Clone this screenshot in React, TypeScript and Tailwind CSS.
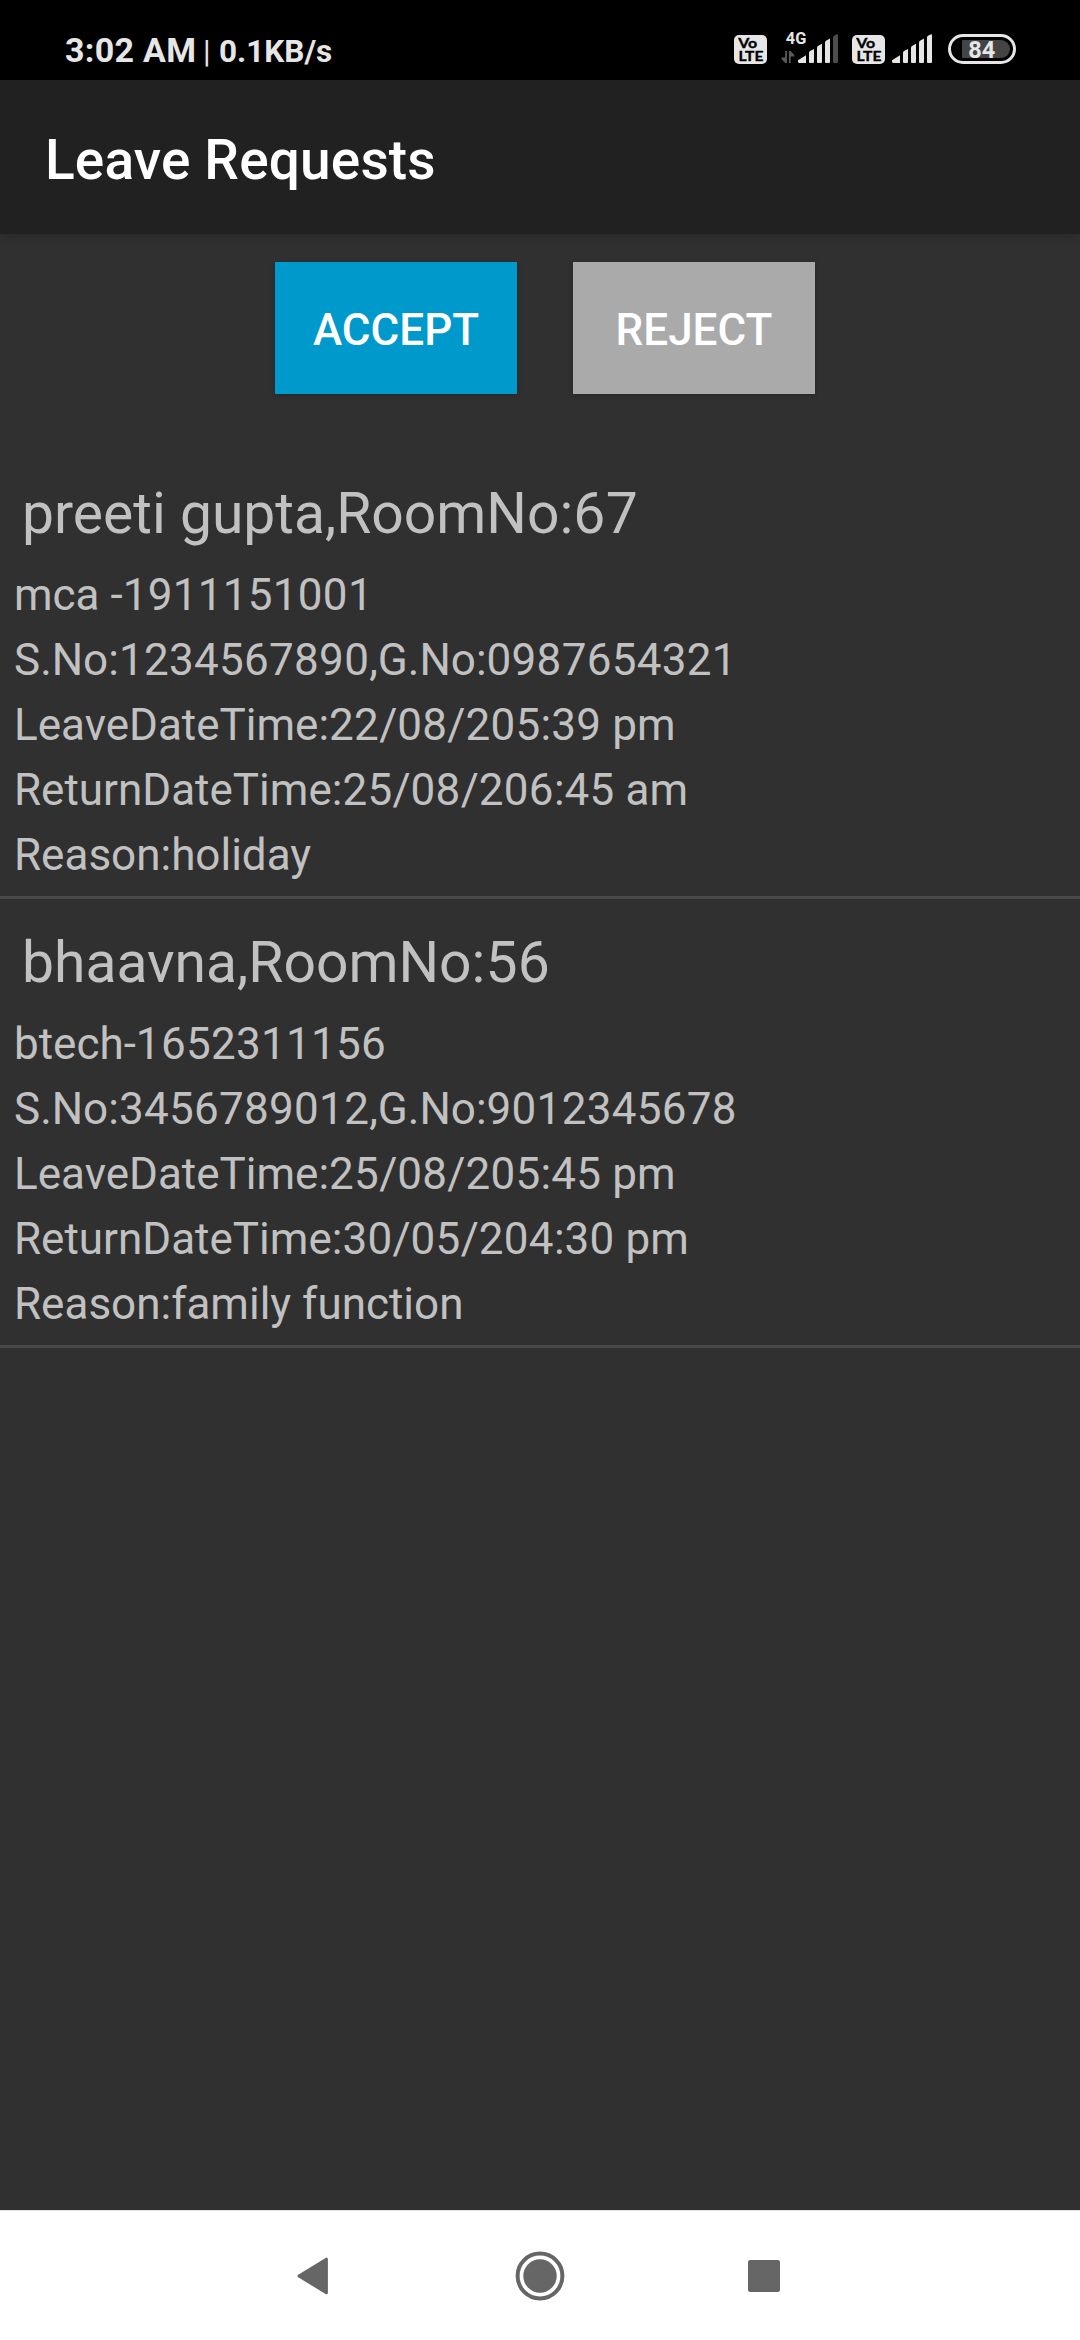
import type { ReactNode } from "react";

type LeaveRequest = { title: string; lines: string[] };

const requests: LeaveRequest[] = [
  {
    title: "preeti gupta,RoomNo:67",
    lines: [
      "mca -1911151001",
      "S.No:1234567890,G.No:0987654321",
      "LeaveDateTime:22/08/205:39 pm",
      "ReturnDateTime:25/08/206:45 am",
      "Reason:holiday",
    ],
  },
  {
    title: "bhaavna,RoomNo:56",
    lines: [
      "btech-1652311156",
      "S.No:3456789012,G.No:9012345678",
      "LeaveDateTime:25/08/205:45 pm",
      "ReturnDateTime:30/05/204:30 pm",
      "Reason:family function",
    ],
  },
];

function VolteIcon() {
  return (
    <svg className="h-[29px] w-[33px] shrink-0" viewBox="0 0 33 29" aria-hidden="true">
      <rect width="33" height="29" rx="5" fill="#e6e6e6" />
      <g fill="#000" stroke="#000" strokeWidth="0.3" fontFamily="Lato, sans-serif" fontWeight="700">
        <text x="4.2" y="12.8" fontSize="13" textLength="19" lengthAdjust="spacingAndGlyphs">Vo</text>
        <text x="4.4" y="25.8" fontSize="12.8" textLength="25" lengthAdjust="spacingAndGlyphs">LTE</text>
      </g>
    </svg>
  );
}

/* Five rising bars, each cut along one slanted top edge. */
function SignalBars({ last }: { last: string }) {
  return (
    <g fill="#e6e6e6">
      <path d="M0 26.2 L8 21.2 V29 H1.5 Q0 29 0 27.5 Z" />
      <path d="M11 18.6 Q11 17.6 12 17 L16 15 V28 Q16 29 15 29 H12 Q11 29 11 28 Z" />
      <path d="M19 13.5 Q19 12.5 20 11.9 L24 9.8 V28 Q24 29 23 29 H20 Q19 29 19 28 Z" />
      <path d="M27 8.4 Q27 7.4 28 6.8 L32 4.6 V28 Q32 29 31 29 H28 Q27 29 27 28 Z" />
      <path d="M35 3.4 Q35 2.4 36 1.8 L39 0.2 Q40 0 40 1 V28 Q40 29 39 29 H36 Q35 29 35 28 Z" fill={last} />
    </g>
  );
}

function MobileDataIcon() {
  return (
    <svg className="ml-[14px] h-[40px] w-[58px] shrink-0" viewBox="0 -8 58 40" aria-hidden="true">
      <text x="4.8" y="12.4" fontSize="16.4" fontWeight="700" fill="#e6e6e6" textLength="20.5" lengthAdjust="spacingAndGlyphs">4G</text>
      <path d="M4.1 19 H5.9 V31 H4.3 L0.6 27.2 V25.6 H4.1 Z" fill="#595959" />
      <path d="M9.7 31 H7.9 V19 H9.5 L13.2 22.8 V24.4 H9.7 Z" fill="#595959" />
      <g transform="translate(17 2)">
        <SignalBars last="#4c4c4c" />
      </g>
    </svg>
  );
}

function BatteryIcon() {
  return (
    <svg className="ml-[16px] h-[30px] w-[68px] shrink-0" viewBox="0 0 68 30" aria-hidden="true">
      <rect x="1.5" y="1.5" width="65" height="27" rx="13.5" fill="none" stroke="#e6e6e6" strokeWidth="3" />
      <path d="M15 6 H53 A9 9 0 0 1 53 24 H15 Q14 24 14 23 V7 Q14 6 15 6 Z" fill="#444" />
      <text x="20.2" y="23.7" fontSize="24" fontWeight="700" fill="#e6e6e6" textLength="27" lengthAdjust="spacingAndGlyphs">84</text>
    </svg>
  );
}

function StatusBar() {
  return (
    <header className="flex h-20 shrink-0 items-start bg-black pl-[65px] pr-16 text-[#e6e6e6]">
      <div className="flex items-baseline pt-[30px] font-bold leading-10 whitespace-pre">
        <span className="w-[138px] text-[34px] tracking-[0.3px]">3:02 AM</span>
        <span className="w-[16px] text-[31px] font-normal">|</span>
        <span className="text-[31.5px]">0.1KB/s</span>
      </div>
      <div className="ml-auto flex h-16 items-end">
        <VolteIcon />
        <MobileDataIcon />
        <span className="w-[13px]" />
        <VolteIcon />
        <svg className="ml-[7px] mb-px h-[29px] w-[40px] shrink-0" viewBox="0 0 40 29" aria-hidden="true">
          <SignalBars last="#e6e6e6" />
        </svg>
        <BatteryIcon />
      </div>
    </header>
  );
}

function ActionButton({ className, children }: { className: string; children: ReactNode }) {
  return (
    <button
      className={`h-[132px] w-[242px] pt-1 text-[44px] font-medium text-white shadow-[0_1px_4px_rgba(0,0,0,0.25)] ${className}`}
    >
      {children}
    </button>
  );
}

/* Digits are set slightly wider than letters. */
function SpacedText({ text }: { text: string }) {
  return text.split(/(\d+)/).map((part, i) =>
    i % 2 ? (
      <span key={i} className="tracking-[0.3px]">
        {part}
      </span>
    ) : (
      part
    ),
  );
}

function RequestItem({ request }: { request: LeaveRequest }) {
  return (
    <li className="h-[449px] border-b-[3px] border-[#494949] text-[#c1c1c1]">
      <h2 className="pt-7 pl-[22px] text-[57px] leading-[71px]">
        <SpacedText text={request.title} />
      </h2>
      <div className="pt-[14px] pl-[14px] text-[44px] leading-[65px]">
        {request.lines.map((line) => (
          <p key={line}>
            <SpacedText text={line} />
          </p>
        ))}
      </div>
    </li>
  );
}

function NavigationBar() {
  return (
    <nav className="flex h-[130px] shrink-0 items-center justify-center border-t border-[#e0e0e0] bg-white pr-1">
      <svg className="h-[38px] w-[32px]" viewBox="0 0 32 38" aria-hidden="true">
        <path d="M3 19 L30.4 2.2 V35.8 Z" fill="#666" stroke="#666" strokeWidth="3" strokeLinejoin="round" />
      </svg>
      <svg className="ml-[187px] h-[50px] w-[50px]" viewBox="0 0 50 50" aria-hidden="true">
        <circle cx="25" cy="25" r="22.4" fill="none" stroke="#666" strokeWidth="4" />
        <circle cx="25" cy="25" r="16.7" fill="#666" />
      </svg>
      <span className="ml-[183px] h-8 w-8 rounded-[2px] bg-[#666]" />
    </nav>
  );
}

export default function App() {
  return (
    <div className="flex h-[2340px] w-[1080px] flex-col overflow-hidden bg-[#303030] font-['Roboto',sans-serif]">
      <StatusBar />
      <div className="z-10 flex h-[154px] shrink-0 items-center bg-[#212121] pl-[45px] pt-1.5 shadow-[0_2px_10px_rgba(0,0,0,0.2)]">
        <h1 className="text-[55px] font-medium tracking-[0.15px] text-white">Leave Requests</h1>
      </div>
      <main className="flex-1">
        <div className="flex h-[216px] gap-14 pl-[275px] pt-7">
          <ActionButton className="bg-[#0099cc]">ACCEPT</ActionButton>
          <ActionButton className="bg-[#aaaaaa]">REJECT</ActionButton>
        </div>
        <ul>
          {requests.map((request) => (
            <RequestItem key={request.title} request={request} />
          ))}
        </ul>
      </main>
      <NavigationBar />
    </div>
  );
}
